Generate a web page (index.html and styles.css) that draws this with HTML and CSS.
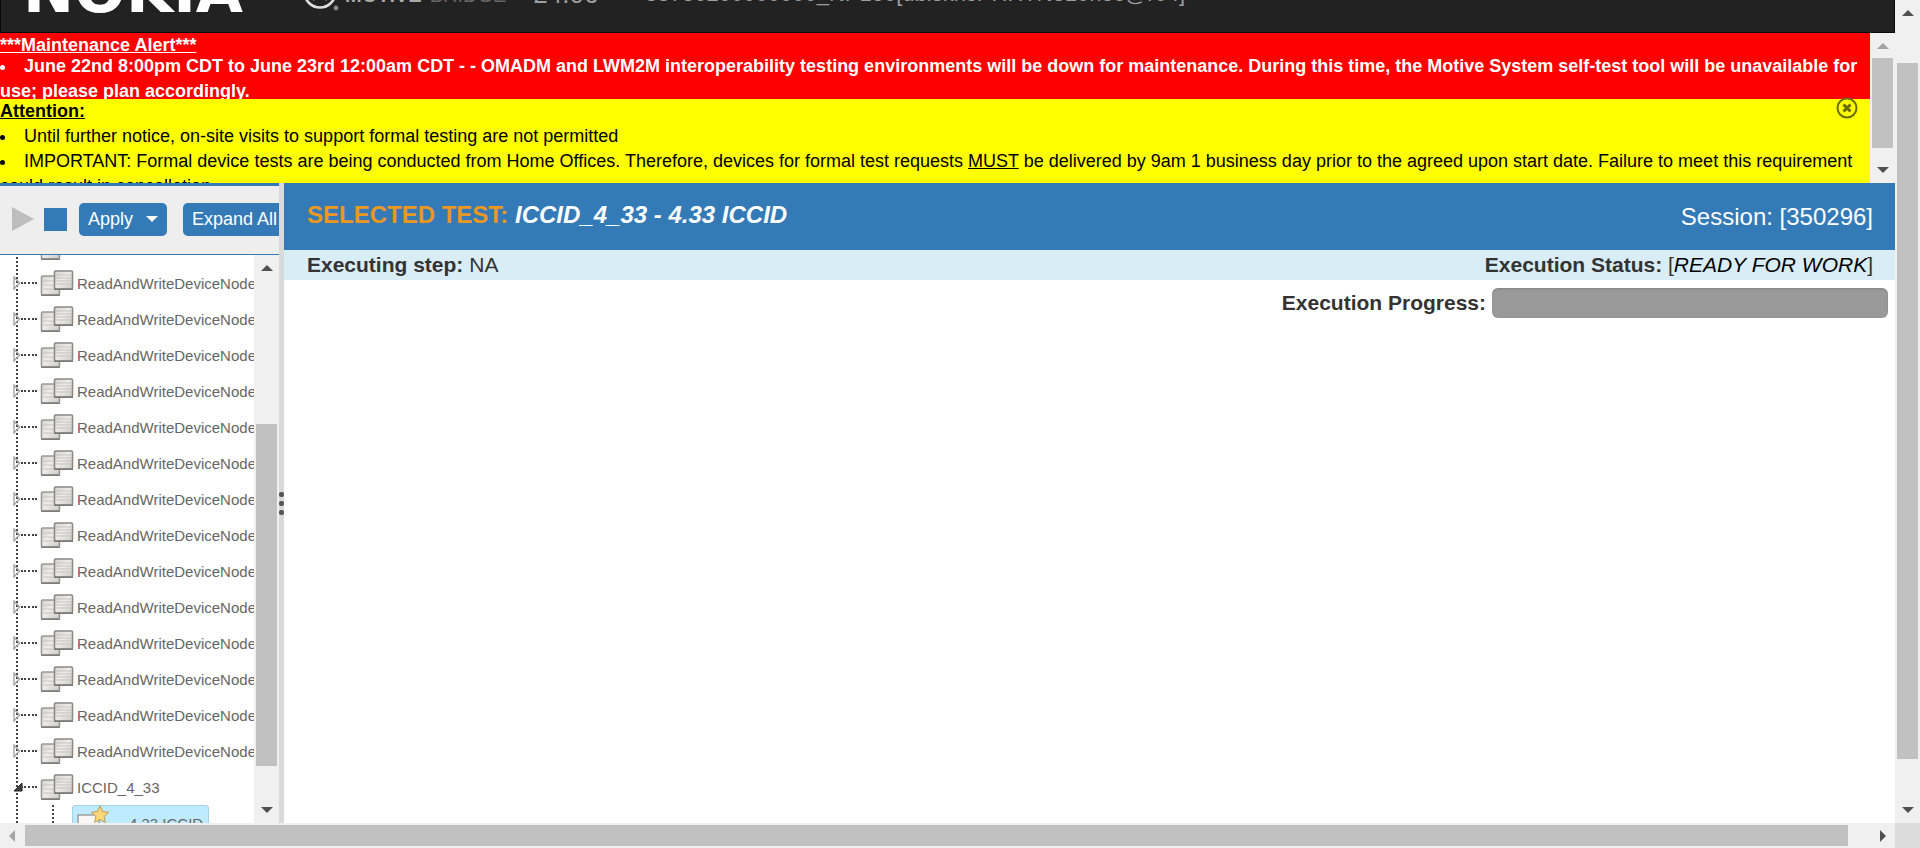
FILE: index.html
```html
<!DOCTYPE html>
<html lang="en">
<head>
<meta charset="utf-8">
<title>Motive Bridge</title>
<link rel="stylesheet" href="styles.css">
<script src="tree.js" defer></script>
</head>
<body>
<svg class="defs" width="0" height="0" aria-hidden="true">
  <defs>
    <linearGradient id="metal" x1="0" y1="0" x2="1" y2="1">
      <stop offset="0" stop-color="#d3d0cb"/>
      <stop offset="0.45" stop-color="#efedea"/>
      <stop offset="1" stop-color="#cdcac5"/>
    </linearGradient>
    <symbol id="folder" viewBox="0 0 34 28">
      <rect x="1.5" y="7" width="18" height="19" rx="1" fill="url(#metal)" stroke="#9b9996" stroke-width="1.6"/>
      <path d="M1 26.200h19" stroke="#777" stroke-width="1.4"/>
      <path d="M3 12h12M3 16h12M3 20h14" stroke="#c9c6c1" stroke-width="1"/>
      <rect x="14.500" y="2" width="18" height="18" rx="1" fill="url(#metal)" stroke="#8b8986" stroke-width="1.6"/>
      <path d="M16 6h15M16 9h15M16 12h15M16 15h15" stroke="#c6c3be" stroke-width="1"/>
      <path d="M14 20.200h19" stroke="#777" stroke-width="1.4"/>
    </symbol>
    <symbol id="closed" viewBox="0 0 8 14">
      <path d="M1 1v12l5.500-6z" fill="none" stroke="#a5a5a5" stroke-width="1.4"/>
    </symbol>
    <symbol id="open" viewBox="0 0 10 10">
      <path d="M9 1v8H1z" fill="#404040" stroke="#222"/>
    </symbol>
    <symbol id="up" viewBox="0 0 12 6"><path d="M0 6 6 0l6 6z"/></symbol>
    <symbol id="down" viewBox="0 0 12 6"><path d="M0 0h12L6 6z"/></symbol>
    <symbol id="left" viewBox="0 0 6 12"><path d="M6 0v12L0 6z"/></symbol>
    <symbol id="right" viewBox="0 0 6 12"><path d="M0 0v12l6-6z"/></symbol>
  </defs>
</svg>

<div class="window">
  <div class="page">
    <header class="topbar">
      <span class="brand">NOKIA</span>
      <svg class="emblem" width="38" height="38" viewBox="0 0 38 38" aria-hidden="true">
        <circle cx="17" cy="18" r="15.5" fill="none" stroke="#ddd" stroke-width="2.6"/>
        <path d="M7 12l4 12 6-12 6 12 4-12" fill="none" stroke="#ddd" stroke-width="2.4"/>
        <circle cx="33" cy="33" r="5" fill="#222"/>
        <circle cx="33" cy="34" r="2.400" fill="#888"/>
      </svg>
      <span class="product"><b>MOTIVE</b><span>BRIDGE</span></span>
      <span class="version">24.06</span>
      <span class="device">33786200000000_NP180[dbiskncPHHTNo10noc@r64]</span>
    </header>

    <div class="notices">
      <div class="notices-body">
        <section class="alert">
          <h2>***Maintenance Alert***</h2>
          <ul>
            <li>June 22nd 8:00pm CDT to June 23rd 12:00am CDT - - OMADM and LWM2M interoperability testing environments will be down for maintenance. During this time, the Motive System self-test tool will be unavailable for use; please plan accordingly.</li>
          </ul>
        </section>
        <section class="attention">
          <h2>Attention:</h2>
          <ul>
            <li>Until further notice, on-site visits to support formal testing are not permitted</li>
            <li>IMPORTANT: Formal device tests are being conducted from Home Offices. Therefore, devices for formal test requests <u>MUST</u> be delivered by 9am 1 business day prior to the agreed upon start date. Failure to meet this requirement could result in cancellation</li>
          </ul>
          <button class="dismiss" type="button" aria-label="Close">
            <svg width="22" height="22" viewBox="0 0 22 22"><circle cx="11" cy="11" r="9.5" fill="none" stroke="#6b6b00" stroke-width="2"/><path d="M7.500 7.500l7 7M14.500 7.500l-7 7" stroke="#6b6b00" stroke-width="3"/></svg>
          </button>
        </section>
      </div>
      <div class="bar vertical">
        <svg class="arrow faint" width="12" height="6"><use href="#up"/></svg>
        <div class="track"><div class="thumb notices-thumb"></div></div>
        <svg class="arrow" width="12" height="6"><use href="#down"/></svg>
      </div>
    </div>

    <div class="workspace">
      <aside class="sidebar">
        <div class="toolbar">
          <button class="icon-button" type="button" aria-label="Run"><svg width="22" height="24" viewBox="0 0 22 24"><path d="M0 0l22 12L0 24z" fill="#bdbdbd"/></svg></button>
          <button class="icon-button stop" type="button" aria-label="Stop"><svg width="23" height="23"><rect width="23" height="23" fill="#337ab7"/></svg></button>
          <button class="button apply" type="button">Apply <svg width="12" height="6" fill="#fff"><use href="#down"/></svg></button>
          <button class="button" type="button">Expand All</button>
        </div>
        <div class="tree-area">
          <ul class="tree" id="tree">
            <li class="row open-row"><svg class="expander-open" width="10" height="10"><use href="#open"/></svg><span class="link"></span><svg class="folder" width="34" height="28"><use href="#folder"/></svg><span class="name">ICCID_4_33</span></li>
            <li class="row child-row"><span class="child-line"></span><span class="chosen"><svg width="42" height="34" viewBox="0 0 42 34"><rect x="5" y="9" width="21" height="20" fill="#f8f7f5" stroke="#999" stroke-width="1.4"/><path d="M27 0l2.600 5.500 6 .8-4.400 4.100 1.100 6L27 13.500l-5.300 2.900 1.100-6-4.400-4.100 6-.8z" fill="#ffd778" stroke="#bd9a52"/></svg><span class="name">4.33 ICCID</span></span></li>
          </ul>
          <div class="bar vertical">
            <svg class="arrow" width="12" height="6"><use href="#up"/></svg>
            <div class="track"><div class="thumb tree-thumb"></div></div>
            <svg class="arrow" width="12" height="6"><use href="#down"/></svg>
          </div>
        </div>
      </aside>
      <div class="splitter"><i></i><i></i><i></i></div>
      <main class="content">
        <div class="test-head">
          <h1>SELECTED TEST: <em>ICCID_4_33 - 4.33 ICCID</em></h1>
          <span class="session">Session: [350296]</span>
        </div>
        <div class="status">
          <span><b>Executing step:</b> NA</span>
          <span><b>Execution Status:</b> [<em>READY FOR WORK</em>]</span>
        </div>
        <div class="progress">
          <b id="progress-label">Execution Progress:</b>
          <div class="progress-bar" role="progressbar" aria-labelledby="progress-label" aria-valuenow="0"></div>
        </div>
      </main>
    </div>
  </div>

  <div class="bar vertical">
    <svg class="arrow" width="12" height="6"><use href="#up"/></svg>
    <div class="track"><div class="thumb page-thumb"></div></div>
    <svg class="arrow" width="12" height="6"><use href="#down"/></svg>
  </div>
  <div class="bar horizontal">
    <svg class="arrow faint" width="6" height="12"><use href="#left"/></svg>
    <div class="track"><div class="thumb wide-thumb"></div></div>
    <svg class="arrow" width="6" height="12"><use href="#right"/></svg>
  </div>
  <div class="corner"></div>
</div>
</body>
</html>
```
FILE: styles.css
```css
* { box-sizing: border-box; }
body {
  margin: 0;
  font-family: "Liberation Sans", Arial, sans-serif;
  color: #333;
  background: #fff;
}
h1, h2, ul { margin: 0; padding: 0; }
ul { list-style: none; }
button { font: inherit; border: 0; padding: 0; background: none; cursor: pointer; }
svg { display: block; flex: none; }
.defs { position: absolute; }

.window {
  display: grid;
  grid-template-columns: minmax(0, 1fr) 25px;
  grid-template-rows: minmax(0, 1fr) 25px;
  height: 100vh;
  overflow: hidden;
}
.page {
  display: flex;
  flex-direction: column;
  min-height: 0;
}

/* scroll bars */
.bar {
  display: flex;
  align-items: center;
  background: #f0f0f0;
}
.vertical {
  flex-direction: column;
  flex: none;
  width: 25px;
  padding: 10px 0;
}
.horizontal { padding: 0 9px; }
.track {
  display: flex;
  flex: 1;
  min-height: 0;
  min-width: 0;
}
.vertical .track {
  flex-direction: column;
  width: 21px;
  margin: 9px 0;
}
.horizontal .track {
  height: 21px;
  margin: 0 10px;
}
.thumb { background: #c1c1c1; }
.arrow { fill: #505050; }
.faint { fill: #a3a3a3; }
.page-thumb { height: 90%; margin-top: 38px; }
.notices-thumb { height: 90%; }
.tree-thumb { height: 66%; margin-top: 144px; }
.wide-thumb { width: 98.8%; }
.corner { background: #dcdcdc; }

/* top bar */
.topbar {
  display: flex;
  align-items: flex-end;
  flex: none;
  height: 33px;
  padding: 0 22px 21px;
  overflow: hidden;
  white-space: nowrap;
  background: #222;
  border: solid #080808;
  border-width: 0 1px 1px;
  color: #9d9d9d;
}
.brand {
  width: 280px;
  margin-bottom: -15px;
  font: bold 61px/70px "DejaVu Sans", sans-serif;
  color: #fff;
}
.emblem { margin-bottom: -1px; }
.product {
  display: flex;
  gap: 8px;
  margin: 0 27px 4px 4px;
  font-size: 20px;
  line-height: 24px;
}
.product b { color: #aaa; }
.product span { color: #666; }
.version {
  width: 112px;
  margin-bottom: 2px;
  font-size: 26px;
  line-height: 30px;
}
.device {
  margin-bottom: 4px;
  font-size: 22px;
  line-height: 26px;
}

/* notices */
.notices {
  display: flex;
  flex: none;
  height: 150px;
}
.notices-body {
  flex: 1;
  min-width: 0;
  overflow: hidden;
  font-size: 18px;
  line-height: 25px;
}
.notices h2 {
  font-size: 18px;
  line-height: inherit;
  text-decoration: underline;
}
.notices li::before {
  content: "";
  display: inline-block;
  width: 5px;
  height: 5px;
  margin-right: 19px;
  border-radius: 50%;
  vertical-align: 2px;
  background: currentColor;
}
.alert {
  padding-top: 1px;
  background: #f00;
  color: #fff;
  font-weight: bold;
}
.alert h2 { line-height: 22px; }
.alert ul { margin: -2px 0 -5px; }
.attention {
  position: relative;
  background: #ff0;
  color: #000;
}
.dismiss {
  position: absolute;
  top: -2px;
  right: 12px;
}

/* work area */
.workspace {
  display: flex;
  flex: 1;
  min-height: 0;
}
.sidebar {
  display: flex;
  flex-direction: column;
  flex: none;
  width: 279px;
}
.toolbar {
  display: flex;
  align-items: center;
  flex: none;
  height: 72px;
  padding: 0 0 2px 12px;
  overflow: hidden;
  background: #eee;
  border-top: 3px solid #337ab7;
  border-bottom: 1px solid #337ab7;
}
.icon-button { margin-right: 10px; }
.icon-button.stop { margin-right: 12px; }
.button {
  display: flex;
  align-items: center;
  flex: none;
  height: 33px;
  padding: 0 9px;
  border-radius: 5px;
  background: #337ab7;
  color: #fff;
  font-size: 18px;
}
.apply { gap: 13px; margin-right: 16px; }
.tree-area {
  display: flex;
  flex: 1;
  min-height: 0;
}
.tree {
  flex: 1;
  min-width: 0;
  margin-top: -26px;
  overflow: hidden;
  clip-path: inset(26px 0 0 0);
  font-size: 15px;
  color: #666;
}
.row {
  display: flex;
  align-items: center;
  height: 36px;
  padding-left: 13px;
  white-space: nowrap;
  background: repeating-linear-gradient(#444 0 2px, #fff 2px 4px) 16px 0 / 2px 100% no-repeat;
}
.link {
  flex: none;
  width: 16px;
  border-top: 2px dotted #444;
}
.name { flex: none; }
.folder { margin: 0 3px; }
.open-row .link { margin-left: -2px; }
.child-row {
  align-items: flex-start;
}
.child-line {
  width: 2px;
  height: 36px;
  margin: 0 18px 0 39px;
  background: repeating-linear-gradient(#444 0 2px, #fff 2px 4px);
}
.chosen {
  display: flex;
  align-items: center;
  gap: 14px;
  height: 36px;
  padding-right: 5px;
  border: 1px solid #a5d2e6;
  border-radius: 3px;
  background: #beebff;
}
.splitter {
  display: flex;
  flex-direction: column;
  align-items: center;
  justify-content: center;
  gap: 4px;
  flex: none;
  width: 5px;
  background: #d9d9d9;
}
.splitter i {
  width: 5px;
  height: 5px;
  border-radius: 2px;
  background: #555;
}
.content { flex: 1; min-width: 0; }
.test-head {
  display: flex;
  justify-content: space-between;
  padding: 18px 22px 18px 23px;
  background: #337ab7;
  font-size: 24px;
  line-height: 31px;
}
.test-head h1 { font-size: inherit; line-height: 28px; color: #ec971f; }
.test-head em { color: #fff; }
.session { color: #fff; }
.status {
  display: flex;
  justify-content: space-between;
  padding: 0 22px 0 23px;
  background: #d9edf7;
  font-size: 21px;
  line-height: 30px;
}
.status em { color: #000; }
.progress {
  display: flex;
  align-items: center;
  justify-content: flex-end;
  gap: 6px;
  padding: 8px 7px;
  font-size: 21px;
  line-height: 30px;
}
.progress-bar {
  width: 396px;
  height: 30px;
  border-radius: 6px;
  background: #999;
  box-shadow: inset 0 1px 2px rgba(0, 0, 0, 0.15);
}
```
FILE: tree.js
```js
const tree = document.getElementById("tree");
const closedRow =
  '<li class="row"><svg width="8" height="14"><use href="#closed"/></svg><span class="link"></span>' +
  '<svg class="folder" width="34" height="28"><use href="#folder"/></svg>' +
  '<span class="name">ReadAndWriteDeviceNode</span></li>';
tree.insertAdjacentHTML("afterbegin", closedRow.repeat(15));
```
